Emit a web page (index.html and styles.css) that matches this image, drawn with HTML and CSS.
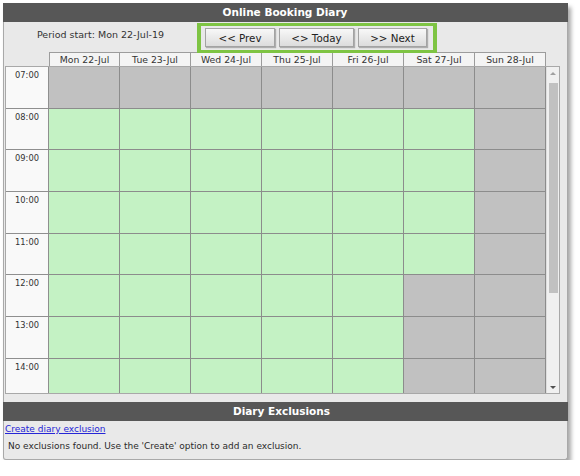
FILE: index.html
```html
<!DOCTYPE html>
<html>
<head>
<meta charset="utf-8">
<link rel="stylesheet" href="styles.css">
</head>
<body>
<div class="panel">
  <div class="titlebar">Online Booking Diary</div>
  <div class="toolbar">
    <div class="period">Period start: Mon 22-Jul-19</div>
    <div class="navbox">
      <button class="btn btn-prev">&lt;&lt; Prev</button>
      <button class="btn btn-today">&lt;&gt; Today</button>
      <button class="btn btn-next">&gt;&gt; Next</button>
    </div>
  </div>
  <div class="calendar">
    <div class="dayhead">
      <div class="dh">Mon 22-Jul</div>
      <div class="dh">Tue 23-Jul</div>
      <div class="dh">Wed 24-Jul</div>
      <div class="dh">Thu 25-Jul</div>
      <div class="dh">Fri 26-Jul</div>
      <div class="dh">Sat 27-Jul</div>
      <div class="dh">Sun 28-Jul</div>
    </div>
    <div class="scroller">
      <div class="rows">
        <div class="row"><div class="time">07:00</div><div class="c off"></div><div class="c off"></div><div class="c off"></div><div class="c off"></div><div class="c off"></div><div class="c off"></div><div class="c off"></div></div>
        <div class="row"><div class="time">08:00</div><div class="c on"></div><div class="c on"></div><div class="c on"></div><div class="c on"></div><div class="c on"></div><div class="c on"></div><div class="c off"></div></div>
        <div class="row"><div class="time">09:00</div><div class="c on"></div><div class="c on"></div><div class="c on"></div><div class="c on"></div><div class="c on"></div><div class="c on"></div><div class="c off"></div></div>
        <div class="row"><div class="time">10:00</div><div class="c on"></div><div class="c on"></div><div class="c on"></div><div class="c on"></div><div class="c on"></div><div class="c on"></div><div class="c off"></div></div>
        <div class="row"><div class="time">11:00</div><div class="c on"></div><div class="c on"></div><div class="c on"></div><div class="c on"></div><div class="c on"></div><div class="c on"></div><div class="c off"></div></div>
        <div class="row"><div class="time">12:00</div><div class="c on"></div><div class="c on"></div><div class="c on"></div><div class="c on"></div><div class="c on"></div><div class="c off"></div><div class="c off"></div></div>
        <div class="row"><div class="time">13:00</div><div class="c on"></div><div class="c on"></div><div class="c on"></div><div class="c on"></div><div class="c on"></div><div class="c off"></div><div class="c off"></div></div>
        <div class="row"><div class="time">14:00</div><div class="c on"></div><div class="c on"></div><div class="c on"></div><div class="c on"></div><div class="c on"></div><div class="c off"></div><div class="c off"></div></div>
      </div>
      <div class="scrollbar">
        <div class="arrow-up"></div>
        <div class="track"><div class="thumb"></div></div>
        <div class="arrow-down"></div>
      </div>
    </div>
  </div>
  <div class="subbar">Diary Exclusions</div>
  <div class="footer">
    <a class="link" href="#">Create diary exclusion</a>
    <div class="msg">No exclusions found. Use the 'Create' option to add an exclusion.</div>
  </div>
</div>
</body>
</html>
```

FILE: styles.css
```css
html, body {
  margin: 0;
  padding: 0;
  background: #ffffff;
}
body {
  font-family: "DejaVu Sans", Verdana, sans-serif;
  color: #2b2b2b;
}
.panel {
  margin: 3px 0 0 3px;
  width: 565px;
  height: 457px;
  box-sizing: border-box;
  background: #e9e9e9;
  border: 1px solid #a9a9a9;
  border-top: none;
  border-radius: 0 0 3px 3px;
  box-shadow: 3px 4px 4px rgba(0, 0, 0, 0.35);
  display: flex;
  flex-direction: column;
}
.titlebar {
  height: 19px;
  background: #575757;
  color: #ffffff;
  font-weight: bold;
  font-size: 10.5px;
  line-height: 19px;
  text-align: center;
  margin: 0 -1px;
  padding-right: 1px;
}
.toolbar {
  height: 30px;
  display: flex;
  align-items: flex-start;
}
.period {
  width: 193px;
  text-align: center;
  font-size: 9.5px;
  padding-top: 7px;
  color: #333;
}
.navbox {
  margin-top: 1px;
  height: 30px;
  width: 240px;
  box-sizing: border-box;
  border: 3px solid #7ec443;
  border-left-width: 4px;
  border-right-width: 4px;
  padding: 2px 0 0 4px;
  display: flex;
  gap: 4px;
  align-items: flex-start;
  position: relative;
  z-index: 2;
}
.btn {
  height: 19px;
  margin: 0;
  padding: 0;
  border: 1px solid #a3a3a3;
  background: linear-gradient(#f8f8f8, #dcdcdc);
  box-shadow: 1px 1px 1px rgba(0, 0, 0, 0.25);
  font-family: "DejaVu Sans", Verdana, sans-serif;
  font-size: 10.3px;
  color: #222;
  text-align: center;
}
.btn-prev { width: 70px; }
.btn-today { width: 75px; }
.btn-next { width: 69px; }
.calendar {
  margin-left: 1px;
  display: flex;
  flex-direction: column;
}
.dayhead {
  display: flex;
  padding-left: 44px;
  height: 14px;
}
.dh {
  width: 71px;
  box-sizing: border-box;
  border: 1px solid #9c9c9c;
  border-left: none;
  border-bottom: none;
  background: #f4f4f4;
  font-size: 9.3px;
  line-height: 13px;
  text-align: center;
  color: #333;
}
.dh:first-child {
  border-left: 1px solid #9c9c9c;
}
.scroller {
  width: 555px;
  height: 328px;
  box-sizing: border-box;
  border: 1px solid #a8a8a8;
  display: flex;
  overflow: hidden;
}
.rows {
  width: 540px;
  display: flex;
  flex-direction: column;
  flex: none;
}
.row {
  display: flex;
  height: 41.7px;
  flex: none;
}
.time {
  width: 43px;
  box-sizing: border-box;
  background: #f9f9f9;
  border-right: 1px solid #8f8f8f;
  border-bottom: 1px solid #8f8f8f;
  font-size: 8.3px;
  text-align: center;
  padding-top: 3px;
  color: #333;
}
.c {
  width: 71px;
  box-sizing: border-box;
  border-right: 1px solid #8c8c8c;
  border-bottom: 1px solid #8c8c8c;
}
.c.on { background: #c4f2c4; }
.c.off { background: #c1c1c1; }
.scrollbar {
  flex: 1;
  background: #f0f0f0;
  border-left: 1px solid #dedede;
  display: flex;
  flex-direction: column;
  align-items: center;
}
.arrow-up {
  margin-top: 5px;
  width: 0;
  height: 0;
  border-left: 3px solid transparent;
  border-right: 3px solid transparent;
  border-bottom: 3px solid #a0a0a0;
}
.track {
  flex: 1;
  width: 100%;
  padding-top: 8px;
}
.thumb {
  margin: 0 auto;
  width: 9px;
  height: 210px;
  background: #c1c1c1;
}
.arrow-down {
  margin-bottom: 4px;
  width: 0;
  height: 0;
  border-left: 3px solid transparent;
  border-right: 3px solid transparent;
  border-top: 3px solid #505050;
}
.subbar {
  margin-top: 8px;
  height: 19px;
  background: #575757;
  color: #ffffff;
  font-weight: bold;
  font-size: 10.5px;
  line-height: 19px;
  text-align: center;
  margin-left: -1px;
  margin-right: -1px;
  padding-right: 8px;
}
.footer {
  display: flex;
  flex-direction: column;
  align-items: flex-start;
}
.link {
  margin-top: 2px;
  margin-left: 1px;
  font-size: 9px;
  color: #2626d6;
  text-decoration: underline;
  line-height: 12px;
}
.msg {
  margin-top: 5px;
  margin-left: 4px;
  font-size: 9px;
  color: #2b2b2b;
  line-height: 12px;
}
```
